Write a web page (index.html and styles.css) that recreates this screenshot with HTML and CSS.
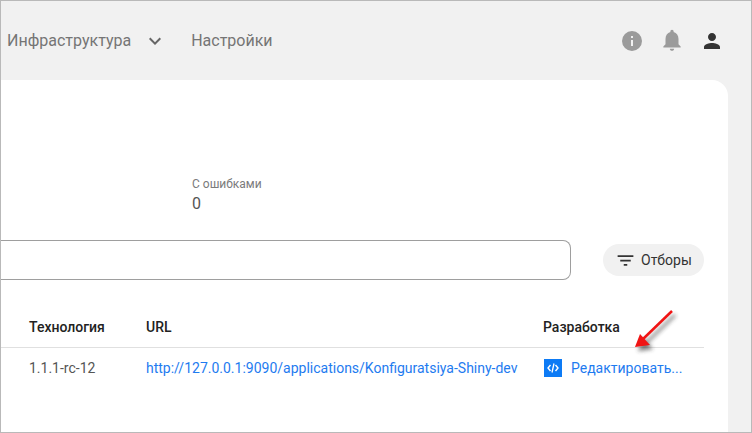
FILE: index.html
```html
<!DOCTYPE html>
<html lang="ru">
<head>
<meta charset="utf-8">
<title>Приложения</title>
<link rel="stylesheet" href="styles.css">
</head>
<body>
<div class="frame">
  <header class="topbar">
    <nav class="nav">
      <span class="nav-item">Инфраструктура</span>
      <svg class="chevron" width="24" height="24" viewBox="0 0 24 24"><path d="M7.41 8.59 12 13.17l4.59-4.58L18 10l-6 6-6-6z"/></svg>
      <span class="nav-item nav-last">Настройки</span>
    </nav>
    <div class="actions">
      <svg class="icon-grey" width="24" height="24" viewBox="0 0 24 24"><path d="M12 2a10 10 0 1 0 0 20 10 10 0 0 0 0-20zm1 15h-2v-6h2v6zm0-8h-2V7h2v2z"/></svg>
      <svg class="icon-grey bell" width="26" height="26" viewBox="0 0 24 24"><path d="M12 22c1.100 0 2-.9 2-2h-4c0 1.100.9 2 2 2zm6-6v-5c0-3.070-1.630-5.640-4.500-6.320V4c0-.83-.67-1.500-1.500-1.500s-1.500.67-1.500 1.500v.68C7.640 5.360 6 7.920 6 11v5l-2 2v1h16v-1l-2-2z"/></svg>
      <svg class="icon-dark" width="24" height="24" viewBox="0 0 24 24"><path d="M12 12c2.210 0 4-1.790 4-4s-1.790-4-4-4-4 1.790-4 4 1.790 4 4 4zm0 2c-2.670 0-8 1.340-8 4v2h16v-2c0-2.660-5.330-4-8-4z"/></svg>
    </div>
  </header>
  <main class="card">
    <div class="stat">
      <div class="stat-label">С ошибками</div>
      <div class="stat-value">0</div>
    </div>
    <div class="toolbar">
      <div class="search"></div>
      <button class="filter" type="button">
        <svg width="21" height="21" viewBox="0 0 24 24"><path d="M10 18h4v-2h-4v2zM3 6v2h18V6H3zm3 7h12v-2H6v2z"/></svg>
        <span>Отборы</span>
      </button>
    </div>
    <div class="table">
      <div class="row head">
        <div class="col-tech">Технология</div>
        <div class="col-url">URL</div>
        <div class="col-dev">Разработка</div>
      </div>
      <div class="row body-row">
        <div class="col-tech">1.1.1-rc-12</div>
        <div class="col-url"><a class="link">http://127.0.0.1:9090/applications/Konfiguratsiya-Shiny-dev</a></div>
        <div class="col-dev">
          <svg class="code-icon" width="18" height="18" viewBox="0 0 18 18"><rect width="18" height="18" fill="#0d7bf5"/><path d="M6.500 6 4 9l2.500 3M11.500 6 14 9l-2.500 3" fill="none" stroke="#fff" stroke-width="1.400"/><path d="M10 4.500 8 13.500" fill="none" stroke="#fff" stroke-width="1.300"/></svg>
          <a class="link">Редактировать...</a>
        </div>
      </div>
    </div>
  </main>
  <svg class="arrow" width="70" height="60" viewBox="0 0 70 60">
    <defs><filter id="sh" x="-40%" y="-40%" width="200%" height="200%"><feGaussianBlur stdDeviation="2"/></filter></defs>
    <g transform="translate(3 4)" fill="#333" opacity=".65" filter="url(#sh)">
      <path d="M42 7 12 36" stroke="#333" stroke-width="2.500"/>
      <path d="M5 43 10 30 20 41z"/>
    </g>
    <path d="M42 7 12 36" stroke="#f01414" stroke-width="2.500" fill="none"/>
    <path d="M5 43 10 30 20 41z" fill="#f01414"/>
  </svg>
</div>
</body>
</html>
```
FILE: styles.css
```css
* { box-sizing: border-box; }
html, body { margin: 0; padding: 0; }
body { font-family: Roboto, "Liberation Sans", sans-serif; }
.frame {
  position: relative;
  width: 752px;
  height: 433px;
  border: 1px solid #b9b9b9;
  background: #f1f1f1;
  display: flex;
  flex-direction: column;
  overflow: hidden;
}
.topbar {
  height: 79px;
  flex: none;
  display: flex;
  align-items: center;
  justify-content: space-between;
  padding: 0 27px 0 6px;
}
.nav { display: flex; align-items: center; }
.nav-item { font-size: 16px; color: #757575; }
.chevron { fill: #666; margin-left: 12px; }
.nav-last { margin-left: 24px; }
.actions { display: flex; align-items: center; gap: 16px; }
.icon-grey { fill: #9b9b9b; }
.icon-dark { fill: #333; }
.bell { margin: -1px -1px 0; }
.card {
  flex: 1;
  margin-right: 23px;
  background: #fff;
  border-radius: 0 16px 0 0;
  padding: 96px 24px 0 0;
  display: flex;
  flex-direction: column;
}
.stat { margin-left: 191px; }
.stat-label { font-size: 12px; line-height: 16px; color: #7b7b7b; }
.stat-value { font-size: 16px; line-height: 24px; color: #555; }
.toolbar {
  display: flex;
  align-items: center;
  justify-content: space-between;
  margin-top: 24px;
}
.search {
  width: 570px;
  height: 40px;
  border: 1px solid #9e9e9e;
  border-left: 0;
  border-radius: 0 8px 8px 0;
}
.filter {
  width: 101px;
  height: 32px;
  border: 0;
  border-radius: 16px;
  background: #f1f1f1;
  display: flex;
  align-items: center;
  gap: 5px;
  padding: 0 0 0 12px;
  font: 14px Roboto, sans-serif;
  color: #333;
}
.filter svg { fill: #333; flex: none; }
.table { margin-top: 10px; font-size: 14px; }
.row { display: flex; align-items: center; }
.head { height: 58px; padding-top: 16px; font-weight: 500; color: #222; border-bottom: 1px solid #e0e0e0; }
.body-row { height: 40px; color: #555; }
.col-tech { width: 145px; padding-left: 28px; flex: none; }
.col-url { width: 397px; flex: none; }
.col-dev { display: flex; align-items: center; gap: 9px; }
.link { color: #1e7bf0; }
.code-icon { flex: none; margin-left: 1px; }
.arrow { position: absolute; left: 629px; top: 303px; }
```
